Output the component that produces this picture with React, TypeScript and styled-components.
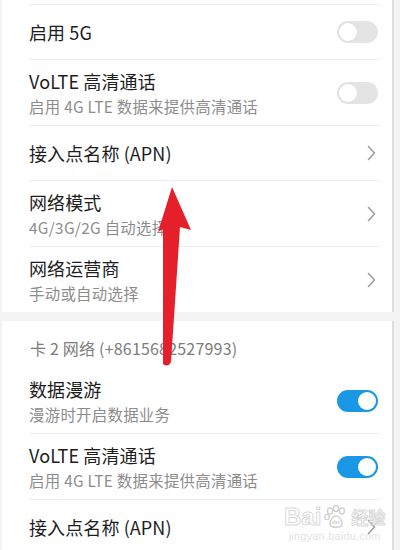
import React from 'react';
import styled, { createGlobalStyle, css } from 'styled-components';

const GlobalStyle = createGlobalStyle`
    html, body {
        margin: 0;
        padding: 0;
        background: #f3f3f3;
    }
    body {
        font-family: "Noto Sans CJK SC", "Noto Sans", Roboto, sans-serif;
    }
`;

const Screen = styled.div`
    position: relative;
    width: 400px;
    height: 550px;
    overflow: hidden;
    background: #f3f3f3;
    display: flex;
    flex-direction: column;
    padding-left: 2px;
    box-sizing: border-box;
`;

const Card = styled.div<{ grow?: boolean }>`
    width: 390px;
    background: #fff;
    border-right: 2px solid #dedede;
    display: flex;
    flex-direction: column;
    ${({ grow }) => grow && css`flex: 1;`}
`;

const TopCap = styled.div`
    height: 4px;
`;

const Gap = styled.div`
    height: 9px;
    flex-shrink: 0;
`;

const Row = styled.div<{ tall?: boolean; first?: boolean }>`
    display: flex;
    align-items: center;
    margin: 0 12px 0 27px;
    height: ${({ tall }) => (tall ? 66 : 55)}px;
    border-top: 1px solid ${({ first }) => (first ? 'transparent' : '#ececec')};
    box-sizing: border-box;
`;

const Texts = styled.div`
    flex: 1;
    display: flex;
    flex-direction: column;
    gap: 2px;
`;

const Title = styled.div`
    font-size: 18px;
    line-height: 24px;
    color: #1d1d1d;
    letter-spacing: 0.1px;
`;

const Sub = styled.div`
    font-size: 15.4px;
    line-height: 22px;
    color: #8c8c8c;
    letter-spacing: 0.3px;
`;

const Header = styled.div`
    margin: 0 12px 0 28px;
    height: 46px;
    display: flex;
    align-items: center;
    padding-top: 7px;
    box-sizing: border-box;
    font-size: 16px;
    letter-spacing: 0.2px;
    color: #7c7c7c;
`;

const Track = styled.div<{ on?: boolean }>`
    width: 41px;
    height: 22px;
    border-radius: 11px;
    margin-right: 2px;
    background: ${({ on }) => (on ? '#1a98e6' : '#e4e4e4')};
    position: relative;
    flex-shrink: 0;
`;

const Knob = styled.div<{ on?: boolean }>`
    position: absolute;
    top: 2px;
    ${({ on }) => (on ? 'right: 2px;' : 'left: 2px;')}
    width: 18px;
    height: 18px;
    border-radius: 50%;
    background: #fff;
    box-shadow: 0 0 0 1px ${({ on }) => (on ? '#1a98e6' : '#dedede')};
`;

const ChevronBox = styled.div`
    width: 12px;
    margin-right: 3px;
    display: flex;
    justify-content: center;
    flex-shrink: 0;
`;

const Overlay = styled.svg`
    position: absolute;
    left: 0;
    top: 0;
    pointer-events: none;
`;

const Watermark = styled.div`
    position: absolute;
    left: 284px;
    top: 504px;
    display: flex;
    flex-direction: column;
    align-items: center;
    color: rgba(200, 200, 200, 0.55);
    font-family: "Liberation Sans", Arial, sans-serif;
    pointer-events: none;
`;

const MarkTop = styled.div`
    display: flex;
    align-items: center;
    gap: 2px;
    font-size: 24px;
    font-weight: bold;
    line-height: 26px;
    -webkit-text-stroke: 1px rgba(190, 190, 190, 0.6);
    color: rgba(255, 255, 255, 0.6);
`;

const MarkCjk = styled.span`
    font-family: "Noto Sans CJK SC", sans-serif;
    font-size: 17px;
    font-weight: bold;
`;

const MarkUrl = styled.div`
    font-size: 11px;
    line-height: 12px;
    letter-spacing: 0.2px;
`;

const Toggle = ({ on }: { on?: boolean }) => (
    <Track on={on}>
        <Knob on={on} />
    </Track>
);

const Chevron = () => (
    <ChevronBox>
        <svg width="9" height="16" viewBox="0 0 9 16">
            <path d="M1.5 1.5 L7.5 8 L1.5 14.5" fill="none" stroke="#9e9e9e" strokeWidth="1.6" strokeLinecap="round" strokeLinejoin="round" />
        </svg>
    </ChevronBox>
);

type Item = { title: string; sub?: string; right: 'off' | 'on' | 'arrow' };

const cardOne: Item[] = [
    { title: '启用 5G', right: 'off' },
    { title: 'VoLTE 高清通话', sub: '启用 4G LTE 数据来提供高清通话', right: 'off' },
    { title: '接入点名称 (APN)', right: 'arrow' },
    { title: '网络模式', sub: '4G/3G/2G 自动选择', right: 'arrow' },
    { title: '网络运营商', sub: '手动或自动选择', right: 'arrow' },
];

const cardTwo: Item[] = [
    { title: '数据漫游', sub: '漫游时开启数据业务', right: 'on' },
    { title: 'VoLTE 高清通话', sub: '启用 4G LTE 数据来提供高清通话', right: 'on' },
    { title: '接入点名称 (APN)', right: 'arrow' },
];

const SettingRow = ({ item, first }: { item: Item; first?: boolean }) => (
    <Row tall={!!item.sub} first={first}>
        <Texts>
            <Title>{item.title}</Title>
            {item.sub && <Sub>{item.sub}</Sub>}
        </Texts>
        {item.right === 'arrow' ? <Chevron /> : <Toggle on={item.right === 'on'} />}
    </Row>
);

export default function App() {
    return (
        <>
            <GlobalStyle />
            <Screen>
                <Card>
                    <TopCap />
                    {cardOne.map(item => <SettingRow key={item.title} item={item} />)}
                </Card>
                <Gap />
                <Card grow>
                    <Header>卡 2 网络 (+8615682527993)</Header>
                    {cardTwo.map((item, i) => <SettingRow key={item.title + i} item={item} first={i === 0} />)}
                </Card>
                <Watermark>
                    <MarkTop>
                        Bai
                        <svg width="26" height="26" viewBox="0 0 26 26">
                            <g fill="none" stroke="rgba(190,190,190,0.7)" strokeWidth="1.4">
                                <ellipse cx="7" cy="7" rx="2.5" ry="3" />
                                <ellipse cx="13" cy="4.5" rx="2.5" ry="3" />
                                <ellipse cx="19" cy="7" rx="2.5" ry="3" />
                                <ellipse cx="4" cy="13" rx="2.2" ry="2.6" />
                                <path d="M7 21 C7 14 11 12 13 12 C15 12 19 14 19 21 C17 24 9 24 7 21 Z" />
                                <text x="9" y="20" fontSize="6" fill="rgba(190,190,190,0.8)" stroke="none">du</text>
                            </g>
                        </svg>
                        <MarkCjk>经验</MarkCjk>
                    </MarkTop>
                    <MarkUrl>jingyan.baidu.com</MarkUrl>
                </Watermark>
                <Overlay width="400" height="550" viewBox="0 0 400 550">
                    <path
                        d="M172 187 L191 230 L180 227 L171 362 Q168 368 163 364 L163 229 L158 232 Z"
                        fill="#e5202b"
                    />
                </Overlay>
            </Screen>
        </>
    );
}
